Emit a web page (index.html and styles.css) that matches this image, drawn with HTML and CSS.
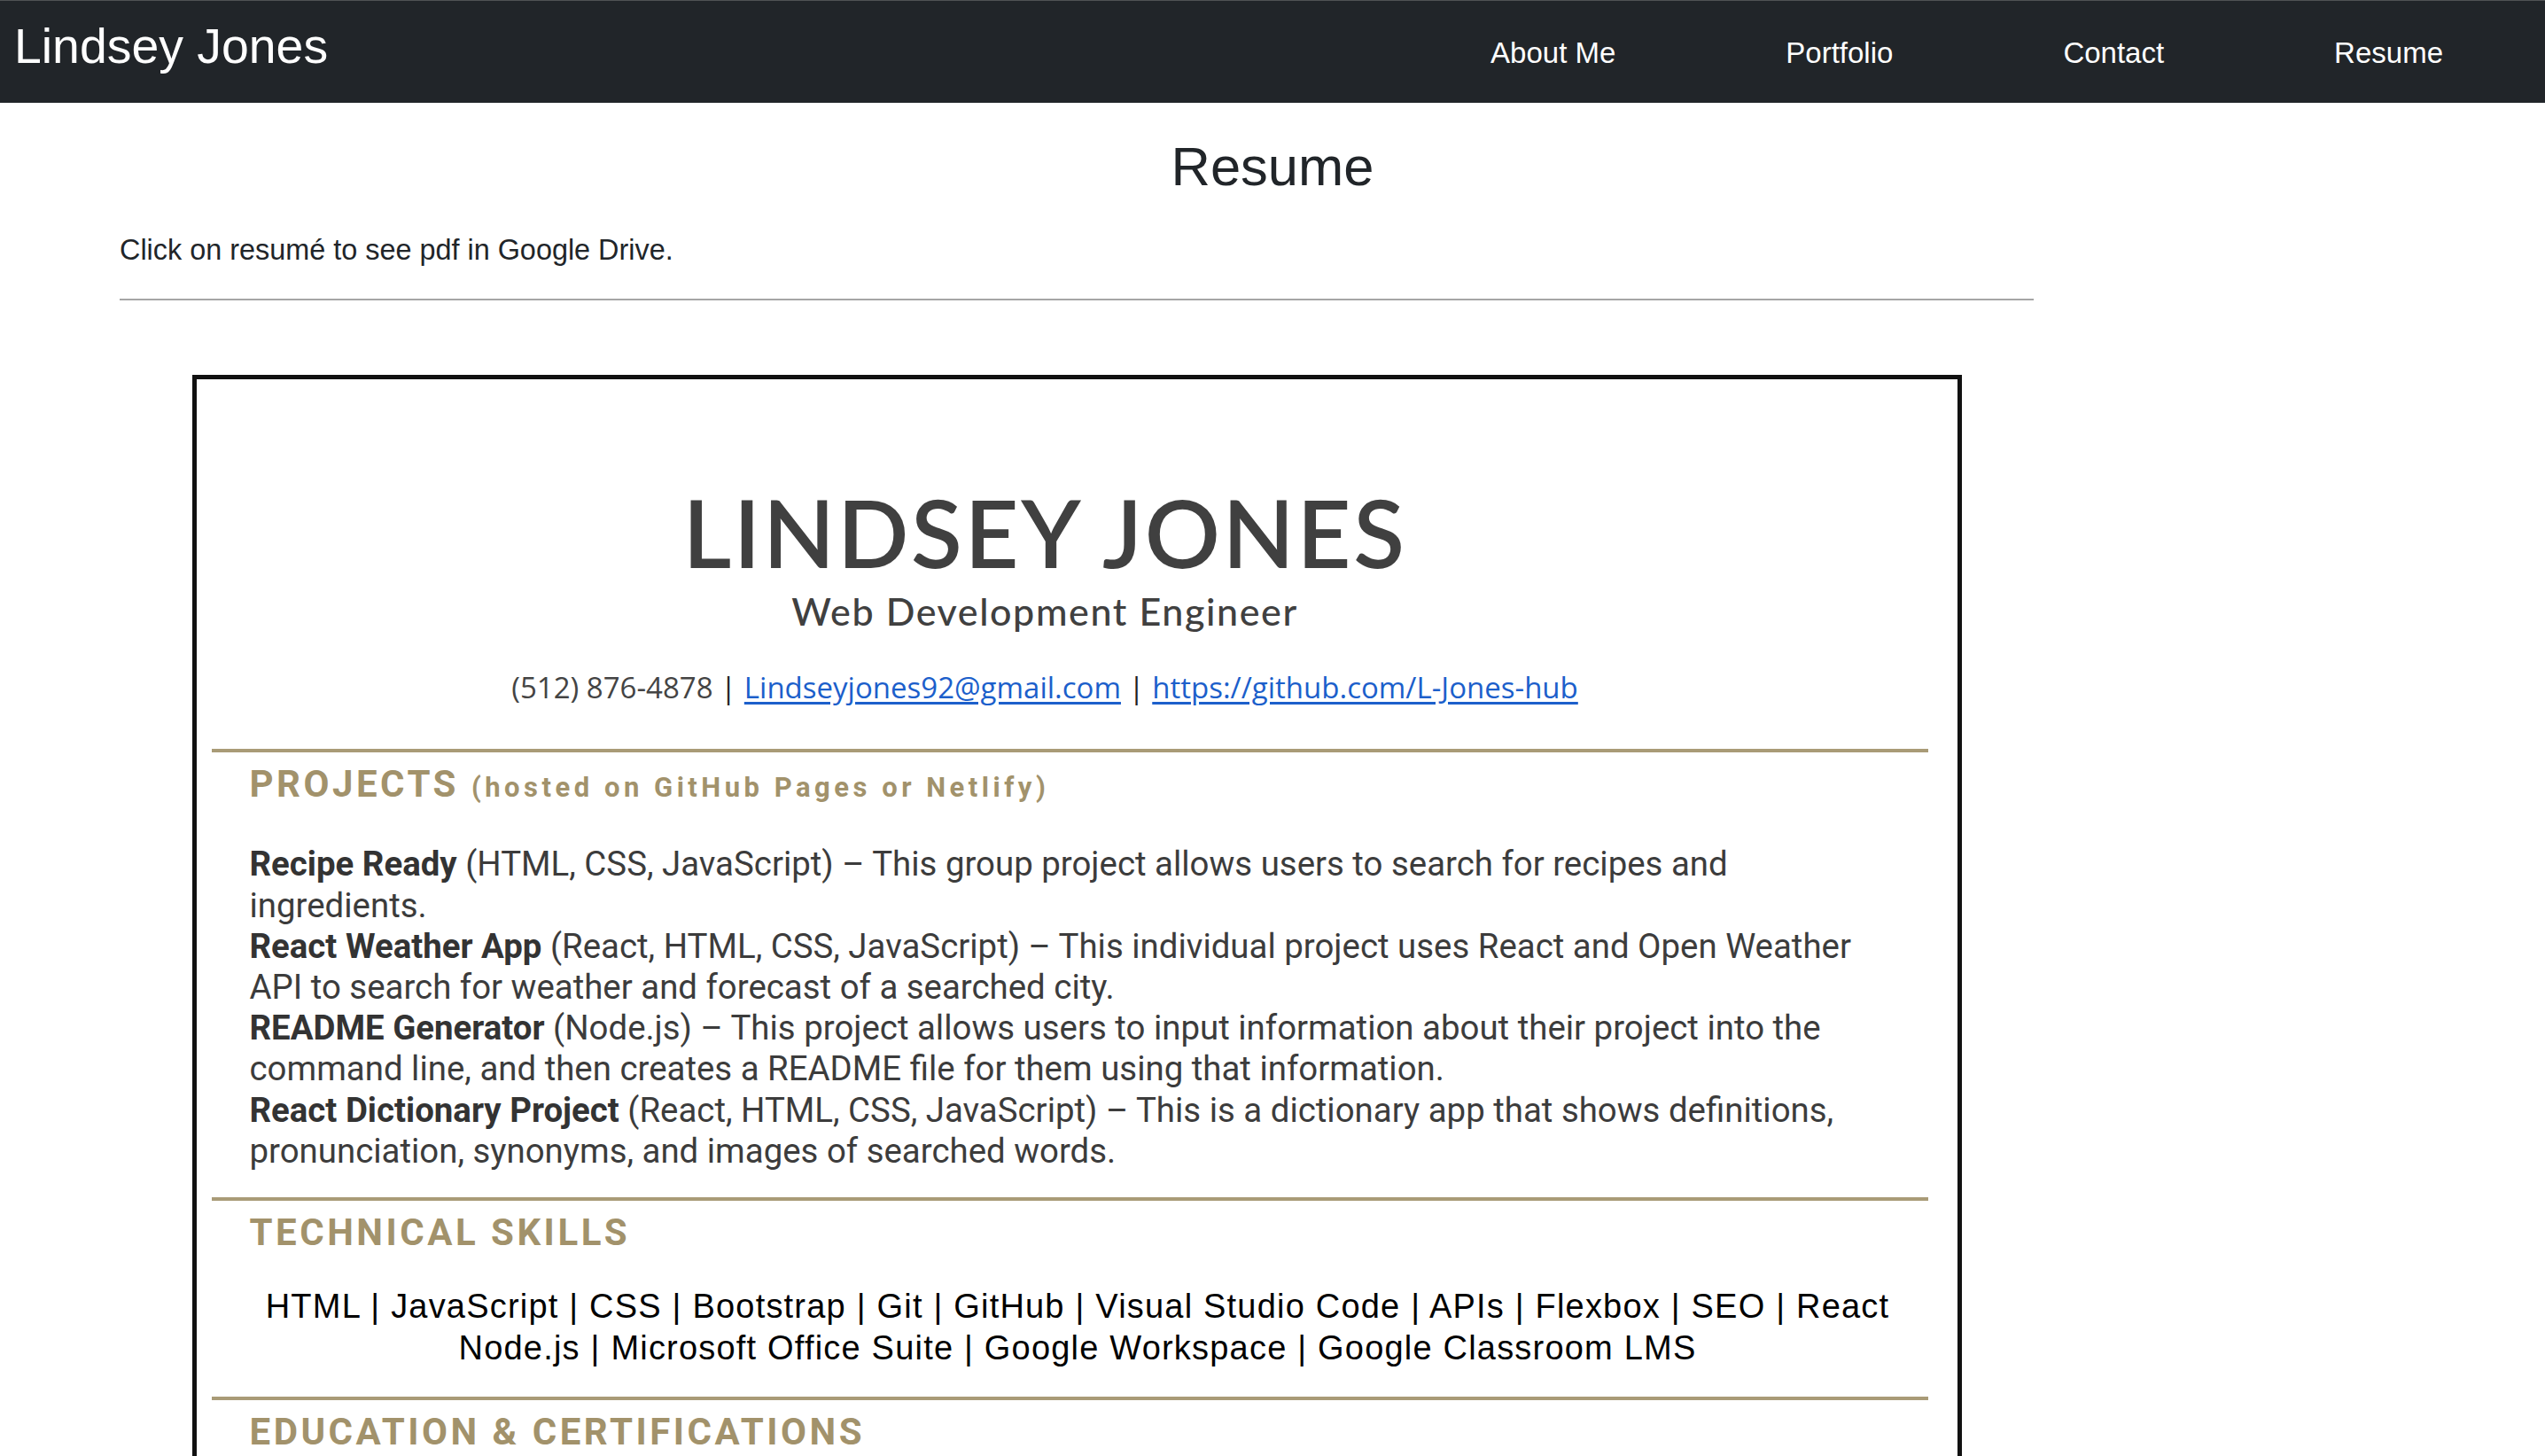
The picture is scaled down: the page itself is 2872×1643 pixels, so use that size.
FILE: index.html
```html
<!DOCTYPE html>
<html lang="en">
<head>
<meta charset="utf-8">
<title>Resume | Lindsey Jones</title>
<link rel="stylesheet" href="styles.css">
</head>
<body>
<header class="navbar">
  <a class="brand" href="#">Lindsey Jones</a>
  <nav class="nav-links">
    <a href="#">About Me</a>
    <a href="#">Portfolio</a>
    <a href="#">Contact</a>
    <a href="#">Resume</a>
  </nav>
</header>

<main class="page">
  <h1 class="page-title">Resume</h1>
  <section class="resume-section">
    <p class="hint">Click on resumé to see pdf in Google Drive.</p>
    <hr class="divider">
    <a class="resume-doc" href="#">
      <div class="doc-header">
        <div class="doc-name">LINDSEY JONES</div>
        <div class="doc-title">Web Development Engineer</div>
        <div class="doc-contact">(512) 876-4878 <span class="sep">|</span> <span class="doc-link">Lindseyjones92@gmail.com</span> <span class="sep">|</span> <span class="doc-link">https://github.com/L-Jones-hub</span></div>
      </div>

      <div class="doc-rule rule-projects"></div>
      <div class="doc-section">
        <div class="doc-heading">PROJECTS <small>(hosted on GitHub Pages or Netlify)</small></div>
        <div class="doc-projects">
          <b>Recipe Ready</b> (HTML, CSS, JavaScript) – This group project allows users to search for recipes and<br>
          ingredients.<br>
          <b>React Weather App</b> (React, HTML, CSS, JavaScript) – This individual project uses React and Open Weather<br>
          API to search for weather and forecast of a searched city.<br>
          <b>README Generator</b> (Node.js) – This project allows users to input information about their project into the<br>
          command line, and then creates a README file for them using that information.<br>
          <b>React Dictionary Project</b> (React, HTML, CSS, JavaScript) – This is a dictionary app that shows definitions,<br>
          pronunciation, synonyms, and images of searched words.
        </div>
      </div>

      <div class="doc-rule rule-skills"></div>
      <div class="doc-section">
        <div class="doc-heading">TECHNICAL SKILLS</div>
        <div class="doc-skills">
          HTML | JavaScript | CSS | Bootstrap | Git | GitHub | Visual Studio Code | APIs | Flexbox | SEO | React<br>
          Node.js | Microsoft Office Suite | Google Workspace | Google Classroom LMS
        </div>
      </div>

      <div class="doc-rule rule-education"></div>
      <div class="doc-section">
        <div class="doc-heading">EDUCATION &amp; CERTIFICATIONS</div>
      </div>
    </a>
  </section>
</main>
</body>
</html>
```

FILE: styles.css
```css
* { box-sizing: border-box; }

body {
  margin: 0;
  font-family: "Liberation Sans", Arial, Helvetica, sans-serif;
  color: #212529;
  background: #ffffff;
}

/* ---------- navbar ---------- */
.navbar {
  display: flex;
  align-items: baseline;
  justify-content: space-between;
  height: 116px;
  padding: 18px 19px 0 16px;
  background: #212529;
  border-top: 1px solid #4f5254;
}

.brand {
  font-size: 55.4px;
  line-height: 66px;
  color: #ffffff;
  text-decoration: none;
}

.nav-links {
  display: flex;
}

.nav-links a {
  font-size: 33px;
  line-height: 40px;
  padding: 0 96px;
  color: #ffffff;
  text-decoration: none;
}

/* ---------- page ---------- */
.page-title {
  margin: 35px 0 0;
  font-size: 61.5px;
  line-height: 1.2;
  font-weight: 400;
  text-align: center;
  color: #212529;
}

.resume-section {
  width: 2160px;
  margin-left: 135px;
}

.hint {
  margin: 33.5px 0 0;
  font-size: 32.4px;
  line-height: 48px;
}

.divider {
  margin: 31px 0 0;
  border: 0;
  border-top: 2px solid #a6a6a6;
}

/* ---------- resume document ---------- */
.resume-doc {
  display: block;
  width: 1997px;
  margin: 84px auto 0;
  padding: 119px 33px 260px 17px;
  border: 5px solid #111111;
  background: #ffffff;
  color: #404040;
  text-decoration: none;
}

.doc-header {
  padding-right: 56px;
  text-align: center;
}

.doc-name {
  font-family: Lato, "Open Sans", sans-serif;
  font-weight: 600;
  font-size: 106px;
  line-height: 106px;
  letter-spacing: 2.6px;
  color: #404040;
}

.doc-title {
  margin-top: 15px;
  font-family: Lato, "Open Sans", sans-serif;
  font-weight: 500;
  font-size: 43px;
  line-height: 43px;
  letter-spacing: 1.6px;
  color: #404040;
}

.doc-contact {
  margin-top: 45px;
  font-family: "Open Sans", sans-serif;
  font-size: 33px;
  line-height: 40px;
  color: #444444;
}

.doc-contact .sep {
  color: #222222;
}

.doc-link {
  color: #1c5fcb;
  text-decoration: underline;
  text-underline-offset: 4px;
}

.doc-rule {
  height: 4px;
  background: #a99b77;
}

.rule-projects { margin-top: 49px; }
.rule-skills { margin-top: 29px; }
.rule-education { margin-top: 32px; }

.doc-section {
  padding: 0 43px;
}

.doc-heading {
  padding-top: 15px;
  font-family: Roboto, "Liberation Sans", sans-serif;
  font-weight: 700;
  font-size: 42px;
  line-height: 42px;
  letter-spacing: 3.5px;
  color: #a2926b;
  white-space: nowrap;
}

.doc-heading small {
  font-size: 31px;
  line-height: 1;
  letter-spacing: 4.5px;
}

.doc-projects {
  margin-top: 46px;
  font-family: Roboto, "Liberation Sans", sans-serif;
  font-size: 38.4px;
  line-height: 46.2px;
  color: #3c3c3c;
  white-space: nowrap;
}

.doc-projects b {
  font-weight: 700;
  color: #333333;
}

.doc-skills {
  margin-top: 39.4px;
  padding-left: 18px;
  font-family: "Liberation Sans", Arial, sans-serif;
  font-size: 38px;
  line-height: 46.5px;
  letter-spacing: 1.2px;
  color: #000000;
  text-align: center;
  white-space: nowrap;
}
```
